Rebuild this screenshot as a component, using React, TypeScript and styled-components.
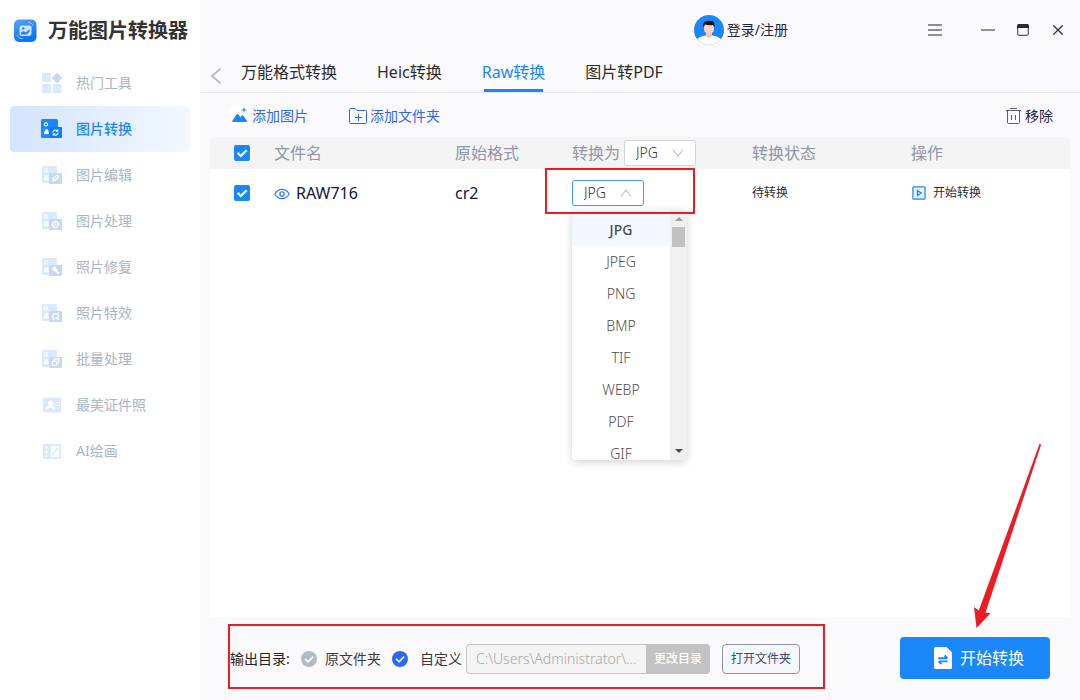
import React, { useState } from "react";
import styled, { createGlobalStyle, css } from "styled-components";

const BLUE = "#1a88fa";
const MARK_RED = "#ed1c24";

const GlobalStyle = createGlobalStyle`
  *, *::before, *::after { box-sizing: border-box; }
  body {
    margin: 0;
    background: #fafafc;
    color: #2b2b2b;
    font-family: "Noto Sans", "Noto Sans CJK SC", sans-serif;
    font-size: 14px;
    line-height: 20px;
  }
  button, input, select { font: inherit; color: inherit; }
  button { border: 0; padding: 0; background: none; cursor: pointer; }
  svg { display: block; flex: none; }
`;

const Page = styled.div`
  display: flex;
  min-height: 100vh;
`;

const Sidebar = styled.aside`
  flex: none;
  width: 200px;
  background: #fff;
`;

const Brand = styled.div`
  display: flex;
  align-items: center;
  gap: 10px;
  height: 60px;
  padding-left: 13px;
`;

const BrandName = styled.h1`
  margin: 0;
  padding-top: 2px;
  font-size: 20px;
  line-height: 28px;
  font-weight: 700;
  color: #333;
`;

const Nav = styled.nav`
  display: flex;
  flex-direction: column;
  padding: 0 10px;
`;

const NavItem = styled.a<{ $active?: boolean }>`
  display: flex;
  align-items: center;
  gap: 14px;
  height: 46px;
  padding-left: 31px;
  border-radius: 4px;
  text-decoration: none;
  color: #a9b5c2;
  ${(p) =>
    p.$active &&
    css`
      color: ${BLUE};
      font-weight: 500;
      background: linear-gradient(90deg, #d3e4ff, #f3f8ff);
    `}
`;

const Main = styled.main`
  flex: 1;
  min-width: 0;
  display: flex;
  flex-direction: column;
`;

const TitleBar = styled.header`
  display: flex;
  align-items: center;
  height: 60px;
  padding-right: 14px;
`;

const Account = styled.button`
  display: flex;
  align-items: center;
  gap: 3px;
  margin-left: auto;
  margin-right: 139px;
  color: #23233f;
`;

const WindowButtons = styled.div`
  display: flex;
  align-items: center;
`;

const WindowButton = styled.button<{ $gap?: number }>`
  display: grid;
  place-items: center;
  width: 16px;
  height: 20px;
  margin-left: ${(p) => p.$gap ?? 0}px;
`;

const TabBar = styled.nav`
  display: flex;
  align-items: stretch;
  height: 33px;
  border-bottom: 1px solid #e6e7ee;
  padding-left: 9px;
`;

const BackButton = styled.button`
  display: grid;
  place-items: center;
  width: 14px;
  margin-right: 18px;
`;

const TabList = styled.div`
  display: flex;
  gap: 40px;
`;

const Tab = styled.a<{ $active?: boolean }>`
  display: flex;
  flex-direction: column;
  justify-content: space-between;
  font-size: 16px;
  line-height: 24px;
  text-decoration: none;
  white-space: nowrap;
  color: ${(p) => (p.$active ? BLUE : "#2b2b2b")};
  &::after {
    content: "";
    height: 3px;
    margin: 0 2px;
    background: ${(p) => (p.$active ? BLUE : "transparent")};
  }
`;

const Toolbar = styled.div`
  display: flex;
  align-items: center;
  height: 44px;
  padding: 2px 27px 0 30px;
`;

const ToolButton = styled.button<{ $tone?: "dark" }>`
  display: flex;
  align-items: center;
  gap: 2px;
  margin-left: ${(p) => (p.$tone === "dark" ? "auto" : "0")};
  margin-right: ${(p) => (p.$tone === "dark" ? "0" : "41px")};
  color: ${(p) => (p.$tone === "dark" ? "#23233f" : "#2f66ee")};
`;

const Panel = styled.section`
  flex: 1;
  margin: 0 10px;
  background: #fff;
  border-radius: 4px 4px 0 0;
`;

const FileTable = styled.table`
  width: 100%;
  table-layout: fixed;
  border-collapse: separate;
  border-spacing: 0;
`;

const HeadCell = styled.th<{ $width?: number }>`
  width: ${(p) => (p.$width ? `${p.$width}px` : "auto")};
  height: 32px;
  padding: 0;
  background: #f4f4f4;
  text-align: left;
  font-size: 16px;
  line-height: 24px;
  font-weight: 400;
  color: #9095a8;
  white-space: nowrap;
  &:first-child { border-top-left-radius: 4px; padding-left: 24px; }
  &:last-child { border-top-right-radius: 4px; }
`;

const Cell = styled.td<{ $small?: boolean }>`
  height: 48px;
  padding: 0;
  font-size: ${(p) => (p.$small ? "12px" : "16px")};
  line-height: 24px;
  color: ${(p) => (p.$small ? "#2b2b2b" : "#14143a")};
  &:first-child { padding-left: 24px; }
`;

const Inline = styled.div<{ $gap: number }>`
  display: flex;
  align-items: center;
  gap: ${(p) => p.$gap}px;
`;

const RowAction = styled.button`
  display: flex;
  align-items: center;
  gap: 7px;
  padding-left: 1px;
  font-size: 12px;
`;

const Stack = styled.span`
  display: grid;
  width: max-content;
  align-items: center;
  > * { grid-area: 1 / 1; }
  > svg { pointer-events: none; }
`;

const CheckBox = styled.input`
  appearance: none;
  width: 16px;
  height: 16px;
  margin: 0;
  border-radius: 2px;
  border: 1px solid #c8ccd4;
  background: #fff;
  &:checked { background: ${BLUE}; border-color: ${BLUE}; }
`;

const Radio = styled.input`
  appearance: none;
  width: 16px;
  height: 16px;
  margin: 0;
  border-radius: 50%;
  background: #b1bac7;
  &:checked { background: #2f66ee; }
`;

const SelectStack = styled(Stack)`
  > svg { justify-self: end; margin-right: 12px; }
`;

const FormatSelect = styled.select<{ $open?: boolean }>`
  appearance: none;
  width: 72px;
  height: 26px;
  padding: 0 0 2px 11px;
  border: 1px solid ${(p) => (p.$open ? "#3d9bfb" : "#d5d5d8")};
  border-radius: 3px;
  background: #fff;
  font-size: 14px;
  font-weight: 300;
  color: #333;
  outline: 0;
`;

const MenuAnchor = styled.div`
  position: relative;
  display: flex;
`;

const MarkBox = styled.div`
  position: absolute;
  left: -27px;
  top: -12px;
  width: 150px;
  height: 46px;
  border: 2px solid ${MARK_RED};
  pointer-events: none;
`;

const Menu = styled.div`
  position: absolute;
  left: 0;
  top: 30px;
  display: flex;
  width: 115px;
  height: 250px;
  overflow: hidden;
  background: #fff;
  border-radius: 4px;
  box-shadow: 0 2px 8px rgba(0, 0, 0, 0.18);
`;

const MenuList = styled.ul`
  flex: 1;
  margin: 0;
  padding: 0;
  list-style: none;
  text-align: center;
`;

const MenuItem = styled.li<{ $selected?: boolean }>`
  height: ${(p) => (p.$selected ? 36 : 32)}px;
  padding-top: ${(p) => (p.$selected ? 4 : 0)}px;
  font-size: 14px;
  line-height: 32px;
  font-weight: ${(p) => (p.$selected ? 500 : 300)};
  color: #4d4d4d;
  background: ${(p) => (p.$selected ? "#f3f7ff" : "#fff")};
`;

const ScrollTrack = styled.div`
  display: flex;
  flex-direction: column;
  align-items: center;
  width: 17px;
  padding: 7px 0;
  background: #f0f0f0;
`;

const ScrollThumb = styled.div`
  width: 13px;
  height: 20px;
  margin: 6px 0 auto;
  background: #c1c1c1;
`;

const Footer = styled.footer`
  position: relative;
  display: flex;
  align-items: center;
  justify-content: space-between;
  height: 83px;
  padding: 0 30px 2px 28px;
`;

const OutputGroup = styled.div`
  display: flex;
  align-items: center;
  height: 65px;
  padding: 5px 23px 0 0;
  border: 2px solid ${MARK_RED};
  margin-bottom: 3px;
  white-space: nowrap;
`;

const OutputTitle = styled.span`
  width: 71px;
  color: #222;
`;

const RadioLabel = styled.label<{ $gap: number; $after: number }>`
  display: flex;
  align-items: center;
  gap: ${(p) => p.$gap}px;
  margin-right: ${(p) => p.$after}px;
  color: #3a3a3a;
`;

const PathInput = styled.input`
  width: 180px;
  height: 30px;
  padding: 0 9px;
  border: 1px solid #c3c3c3;
  border-right: 0;
  border-radius: 4px 0 0 4px;
  background: #f4f4f4;
  font-weight: 300;
  color: #a8a8a8;
`;

const ChangeButton = styled.button`
  width: 64px;
  height: 30px;
  border-radius: 0 4px 4px 0;
  background: #c3c3c3;
  font-size: 12px;
  font-weight: 500;
  color: #fff;
`;

const OpenButton = styled.button`
  width: 78px;
  height: 30px;
  margin-left: 12px;
  border: 1px solid #8f93b0;
  border-radius: 4px;
  background: #f4f7fc;
  font-size: 12px;
  color: #45486b;
`;

const StartButton = styled.button`
  display: flex;
  align-items: center;
  justify-content: center;
  gap: 8px;
  width: 150px;
  height: 42px;
  padding-left: 8px;
  border-radius: 4px;
  background: ${BLUE};
  font-size: 16px;
  line-height: 24px;
  color: #fff;
`;

const PointerArrow = styled.svg`
  position: absolute;
  right: 38px;
  top: -174px;
  pointer-events: none;
`;

const Tick = () => (
  <svg width="16" height="16" viewBox="0 0 16 16" fill="none" stroke="#fff" aria-hidden="true">
    <path d="M3.6 7.8 6.8 11l5.8-5.8" strokeWidth="2.2" />
  </svg>
);

const RoundTick = () => (
  <svg width="16" height="16" viewBox="0 0 16 16" fill="none" stroke="#fff" aria-hidden="true">
    <path d="M4 7.8 7 10.8l5.2-5.2" strokeWidth="1.6" />
  </svg>
);

const Chevron = ({ up }: { up?: boolean }) => (
  <svg width="12" height="8" viewBox="0 0 12 8" fill="none" stroke="#bbbcc0" aria-hidden="true">
    <path d={up ? "M1 7.5 6 1l5 6.5" : "M1 .5 6 7l5-6.5"} strokeWidth="1.1" />
  </svg>
);

const Logo = () => (
  <svg width="25" height="25" viewBox="0 0 25 25" aria-hidden="true">
    <defs>
      <linearGradient id="logo" x1="0" y1="0" x2="0.4" y2="1">
        <stop offset="0" stopColor="#55a6ff" />
        <stop offset="1" stopColor="#0a72f5" />
      </linearGradient>
    </defs>
    <rect x="1" y="1.500" width="22.500" height="22.500" rx="5" fill="url(#logo)" />
    <path d="M8 7.500h9l1.500 1v7.500l-1.500 2H8l-1.500-1.500V9z" fill="#cfe4ff" />
    <circle cx="10.300" cy="10.500" r="1.200" fill="#2583f8" />
    <path d="M8 16.500v-1.800l2.500-1.700 2.300 1.500 3.700-3.500v2.500l-2.500 3z" fill="#2583f8" />
    <path d="M15 4.600c2.500-.3 4.500 1 5.200 3.400M4 17.300c1 2.200 3 3.500 5.800 3.300" fill="none" stroke="#9ccaff" />
  </svg>
);

const glyphs: Record<string, React.ReactNode> = {
  convert: (
    <g fill="none" strokeWidth="1.1">
      <path d="M10.800 13.400a2.700 2.700 0 0 1 4.600-1.600M16.200 13.600a2.700 2.700 0 0 1-4.600 1.700" />
      <path d="M15.800 10.300v1.900h-1.900M11.200 16.700v-1.800h1.900" />
    </g>
  ),
  edit: <path d="m10.800 16 .2-2.200 3.600-3.300c1-.5 2.200.7 1.700 1.700l-3.500 3.300z" fill="none" strokeWidth="1.200" />,
  gear: (
    <g fill="none">
      <circle cx="13.500" cy="13.500" r="2.800" strokeWidth="1.200" />
      <circle cx="13.500" cy="13.500" r=".7" fill="#fff" />
      <path d="M13.500 9.700v1.300M13.500 16v1.300M9.700 13.500H11M16 13.500h1.300M10.900 10.900l.8.800M15.300 15.300l.8.800M16.100 10.900l-.8.800M11.700 15.300l-.8.800" />
    </g>
  ),
  repair: (
    <g>
      <path d="M12.500 12.500l4.300 4" strokeWidth="1.900" />
      <path d="M10.300 10.900l1.400 1 .9-.9-.8-1.400a2.500 2.500 0 0 1 2.400 3.400 2.500 2.500 0 0 1-3.900-2.100z" fill="#fff" />
    </g>
  ),
  effect: (
    <g fill="none">
      <path d="M11 10.500c1 .7 1.800.7 2.500 0 .8.700 1.600.7 2.500 0-.3 1 0 1.800.6 2.400-.6.600-.6 1.300-.3 2M13.700 16c-.8-.4-1.700-.3-2.700.3.300-1 .2-1.800-.6-2.400.7-.7.900-1.600.6-3.400" strokeWidth="1.200" />
      <path d="M14.200 14.200l2.800 2.800" strokeWidth="1.500" />
    </g>
  ),
  batch: (
    <g fill="none" strokeWidth="1.100">
      <rect x="10.300" y="12.300" width="4.200" height="4.200" />
      <path d="M12.300 12V9.900h4.400v4.400h-2" />
    </g>
  ),
};

const PictureIcon = ({ glyph, active }: { glyph: string; active?: boolean }) => (
  <svg width="21" height="20" viewBox="0 0 21 20" aria-hidden="true">
    <rect x={active ? 0 : 1} y={active ? 0 : 1} width={active ? 17 : 15} height={active ? 19 : 17} rx="1.500" fill={active ? BLUE : "#d9eaff"} />
    <g stroke="#fff" fill="#fff">
      <circle cx="5" cy="5.400" r="1.600" fill="none" strokeWidth="1.100" />
      <path d="M4.600 10.500h2l1.500 4.500H2.800z" strokeWidth=".4" />
    </g>
    <rect x="8" y="8" width="13" height="11" rx="1" fill={active ? "#0c7df5" : "#c6d9ef"} />
    <g transform="translate(1 0)" stroke="#fff">{glyphs[glyph]}</g>
  </svg>
);

const ToolsIcon = () => (
  <svg width="21" height="20" viewBox="0 0 21 20" aria-hidden="true">
    <g fill="#d9eaff">
      <rect x="1" y="0" width="9" height="9" rx="1" />
      <rect x="1" y="11" width="9" height="9" rx="1" />
      <rect x="11.500" y="11" width="9" height="9" rx="1" />
    </g>
    <rect x="12.200" y="1.200" width="7.600" height="7.600" rx="1" transform="rotate(45 16 5)" fill="#c6d9ef" />
  </svg>
);

const IdIcon = () => (
  <svg width="21" height="20" viewBox="0 0 21 20" aria-hidden="true">
    <rect x="2" y="2.500" width="18" height="15" rx="1" fill="#d9eaff" />
    <circle cx="9.500" cy="8" r="2.600" fill="#fff" />
    <path d="M4.500 14.500c.4-2.500 2-4 5-4s4.600 1.500 5 4h-2.300c-.3-1.300-1.200-2-2.700-2s-2.400.7-2.700 2z" fill="#fff" />
    <path d="M15 7.500h4M15 10.500h4" stroke="#fff" />
  </svg>
);

const PaintIcon = () => (
  <svg width="21" height="20" viewBox="0 0 21 20" aria-hidden="true">
    <rect x="2" y="3" width="18" height="15" rx="1" fill="#d9eaff" />
    <path d="M5.500 5v2.500M5.500 9v3M5.500 13.500V16M4.200 11.500h2.600" stroke="#fff" strokeWidth="1.100" />
    <rect x="10" y="5" width="8.500" height="11" fill="#fff" />
    <path d="M11 14.500l6-8" stroke="#d9eaff" strokeWidth="1.400" />
  </svg>
);

const Avatar = () => (
  <svg width="30" height="30" viewBox="0 0 30 30" aria-hidden="true">
    <defs>
      <clipPath id="face"><circle cx="15" cy="15" r="15" /></clipPath>
    </defs>
    <g clipPath="url(#face)">
      <rect width="30" height="30" fill={BLUE} />
      <path d="M2.500 30v-5c1-2 4-3.500 9-4.500h7c5 1 8 2.500 9 4.500v5z" fill="#fff" />
      <path d="M12 16h6v5c-1 2-5 2-6 0z" fill="#f7c3ad" />
      <path d="M10 9h10v5c0 3.500-3 5-5 5s-5-1.500-5-5z" fill="#fbd3c0" />
      <path d="M9.500 12.500c-.7-3-.2-5.500 2-6 2-1.200 5-1 7.500-.3 1.500.7 2 3 1.200 6.300l-1.200-2.500c-2.500.3-5.500.3-8-.5z" fill="#161616" />
    </g>
  </svg>
);

const AddPictureIcon = () => (
  <svg width="20" height="20" viewBox="0 0 20 20" aria-hidden="true">
    <rect width="20" height="20" rx="3" fill="#fff" />
    <path d="M2.300 15 6.500 8.500c.6-.8 1.300-.8 1.900 0l1.900 2.600 1.200-1.300c.7-.7 1.400-.6 2 .1l3.300 4.600c.5 1 .1 1.500-.8 1.500H3c-.9 0-1.100-.4-.7-1z" fill={BLUE} />
    <path d="M14 1.500v5M11.500 4h5" stroke={BLUE} strokeWidth="1.100" />
  </svg>
);

const FolderIcon = () => (
  <svg width="19" height="18" viewBox="0 0 19 18" fill="none" stroke="#2f66ee" aria-hidden="true">
    <path d="M.5 15.500v-13a1 1 0 0 1 1-1H6l2 2h8.500a1 1 0 0 1 1 1v11a1 1 0 0 1-1 1h-15a1 1 0 0 1-1-1zM9.500 7v7M6 10.500h7" />
  </svg>
);

const TrashIcon = () => (
  <svg width="17" height="18" viewBox="0 0 17 18" fill="none" stroke="#5c5c7c" aria-hidden="true">
    <path d="M0 3.500h15M4 1.500h7M1.500 3.500v12a1 1 0 0 0 1 1h10a1 1 0 0 0 1-1v-12M5.500 8v5M9.500 8v5" />
  </svg>
);

const EyeIcon = () => (
  <svg width="16" height="14" viewBox="0 0 16 14" fill="none" stroke="#2b7cf8" aria-hidden="true">
    <path d="M.8 8C2.500 5 5 3.300 8 3.300S13.500 5 15.200 8C13.500 11 11 12.700 8 12.700S2.500 11 .8 8z" strokeWidth="1.200" />
    <circle cx="8" cy="8" r="2.100" strokeWidth="1.300" />
  </svg>
);

const PlayIcon = () => (
  <svg width="14" height="14" viewBox="0 0 14 14" fill="none" stroke="#57a5fb" aria-hidden="true">
    <rect x=".9" y=".9" width="12.200" height="12.200" rx="1" strokeWidth="1.700" fill="#e6f2ff" />
    <path d="M5.500 4.500 9.200 7 5.500 9.500z" stroke={BLUE} strokeWidth="1.300" />
  </svg>
);

const FileSwapIcon = () => (
  <svg width="18" height="22" viewBox="0 0 18 22" aria-hidden="true">
    <path d="M1.500 0h11L18 5.500v15a1.500 1.500 0 0 1-1.500 1.500h-15A1.500 1.500 0 0 1 0 20.500v-19A1.500 1.500 0 0 1 1.500 0z" fill="#fff" />
    <path d="M13.200 3.500v1.200h1.200z" fill={BLUE} />
    <path d="M4.300 11.200h9M10.500 8.500l2.900 2.700M13.700 14.400H4.700M7.500 17.100l-2.900-2.700" fill="none" stroke={BLUE} strokeWidth="1.900" />
  </svg>
);

const navItems = [
  { label: "热门工具", icon: <ToolsIcon /> },
  { label: "图片转换", icon: <PictureIcon glyph="convert" active />, active: true },
  { label: "图片编辑", icon: <PictureIcon glyph="edit" /> },
  { label: "图片处理", icon: <PictureIcon glyph="gear" /> },
  { label: "照片修复", icon: <PictureIcon glyph="repair" /> },
  { label: "照片特效", icon: <PictureIcon glyph="effect" /> },
  { label: "批量处理", icon: <PictureIcon glyph="batch" /> },
  { label: "最美证件照", icon: <IdIcon /> },
  { label: "AI绘画", icon: <PaintIcon /> },
];

const tabs = ["万能格式转换", "Heic转换", "Raw转换", "图片转PDF"];
const formats = ["JPG", "JPEG", "PNG", "BMP", "TIF", "WEBP", "PDF", "GIF"];

const SelectField = ({ label, open }: { label: string; open?: boolean }) => (
  <SelectStack>
    <FormatSelect aria-label={label} defaultValue="JPG" $open={open}>
      {formats.map((f) => (
        <option key={f}>{f}</option>
      ))}
    </FormatSelect>
    <Chevron up={open} />
  </SelectStack>
);

const CheckField = ({ label }: { label: string }) => {
  const [on, setOn] = useState(true);
  return (
    <Stack>
      <CheckBox type="checkbox" aria-label={label} checked={on} onChange={() => setOn(!on)} />
      <Tick />
    </Stack>
  );
};

export default function App() {
  const [target, setTarget] = useState("custom");
  return (
    <>
      <GlobalStyle />
      <Page>
        <Sidebar>
          <Brand>
            <Logo />
            <BrandName>万能图片转换器</BrandName>
          </Brand>
          <Nav>
            {navItems.map((item) => (
              <NavItem key={item.label} href="#" $active={item.active}>
                {item.icon}
                {item.label}
              </NavItem>
            ))}
          </Nav>
        </Sidebar>

        <Main>
          <TitleBar>
            <Account>
              <Avatar />
              登录/注册
            </Account>
            <WindowButtons>
              <WindowButton aria-label="菜单">
                <svg width="14" height="12" viewBox="0 0 14 12" stroke="#8f8f8f" strokeWidth="2">
                  <path d="M0 1h14M0 6h14M0 11h14" />
                </svg>
              </WindowButton>
              <WindowButton aria-label="最小化" $gap={37}>
                <svg width="14" height="2" viewBox="0 0 14 2"><rect width="14" height="2" fill="#949494" /></svg>
              </WindowButton>
              <WindowButton aria-label="最大化" $gap={19}>
                <svg width="12" height="12" viewBox="0 0 12 12">
                  <rect x=".7" y=".7" width="10.600" height="10.600" rx="1.500" fill="none" stroke="#5a5a5a" strokeWidth="1.200" />
                  <path d="M0 4V2a2 2 0 0 1 2-2h8a2 2 0 0 1 2 2v2z" fill="#2b2b2b" />
                </svg>
              </WindowButton>
              <WindowButton aria-label="关闭" $gap={19}>
                <svg width="10" height="10" viewBox="0 0 10 10" stroke="#333" strokeWidth="1.300">
                  <path d="M.3.3l9.400 9.400M9.700.3.300 9.700" />
                </svg>
              </WindowButton>
            </WindowButtons>
          </TitleBar>

          <TabBar>
            <BackButton aria-label="返回">
              <svg width="12" height="16" viewBox="0 0 12 16" fill="none" stroke="#bcbcbc" strokeWidth="1.800">
                <path d="M10.500.7 2 8l8.500 7.300" />
              </svg>
            </BackButton>
            <TabList>
              {tabs.map((t) => (
                <Tab key={t} href="#" $active={t === "Raw转换"}>{t}</Tab>
              ))}
            </TabList>
          </TabBar>

          <Toolbar>
            <ToolButton>
              <AddPictureIcon />
              添加图片
            </ToolButton>
            <ToolButton>
              <FolderIcon />
              添加文件夹
            </ToolButton>
            <ToolButton $tone="dark">
              <TrashIcon />
              移除
            </ToolButton>
          </Toolbar>

          <Panel>
            <FileTable>
              <thead>
                <tr>
                  <HeadCell $width={64}><CheckField label="全选" /></HeadCell>
                  <HeadCell $width={181}>文件名</HeadCell>
                  <HeadCell $width={117}>原始格式</HeadCell>
                  <HeadCell $width={180}>
                    <Inline $gap={4}>
                      转换为
                      <SelectField label="全部转换为" />
                    </Inline>
                  </HeadCell>
                  <HeadCell $width={159}>转换状态</HeadCell>
                  <HeadCell>操作</HeadCell>
                </tr>
              </thead>
              <tbody>
                <tr>
                  <Cell><CheckField label="选择 RAW716" /></Cell>
                  <Cell>
                    <Inline $gap={6}>
                      <EyeIcon />
                      RAW716
                    </Inline>
                  </Cell>
                  <Cell>cr2</Cell>
                  <Cell>
                    <MenuAnchor>
                      <SelectField label="转换为" open />
                      <Menu>
                        <MenuList role="listbox" aria-label="输出格式">
                          {formats.map((f) => (
                            <MenuItem key={f} role="option" aria-selected={f === "JPG"} $selected={f === "JPG"}>
                              {f}
                            </MenuItem>
                          ))}
                        </MenuList>
                        <ScrollTrack>
                          <svg width="8" height="4" viewBox="0 0 8 4"><path d="M0 4 4 0l4 4z" fill="#9d9d9d" /></svg>
                          <ScrollThumb />
                          <svg width="8" height="4" viewBox="0 0 8 4"><path d="M0 0h8L4 4z" fill="#4d4d4d" /></svg>
                        </ScrollTrack>
                      </Menu>
                      <MarkBox />
                    </MenuAnchor>
                  </Cell>
                  <Cell $small>待转换</Cell>
                  <Cell $small>
                    <RowAction>
                      <PlayIcon />
                      开始转换
                    </RowAction>
                  </Cell>
                </tr>
              </tbody>
            </FileTable>
          </Panel>

          <Footer>
            <OutputGroup>
              <OutputTitle>输出目录:</OutputTitle>
              <RadioLabel $gap={8} $after={11}>
                <Stack>
                  <Radio type="radio" name="target" checked={target === "source"} onChange={() => setTarget("source")} />
                  <RoundTick />
                </Stack>
                原文件夹
              </RadioLabel>
              <RadioLabel $gap={12} $after={4}>
                <Stack>
                  <Radio type="radio" name="target" checked={target === "custom"} onChange={() => setTarget("custom")} />
                  <RoundTick />
                </Stack>
                自定义
              </RadioLabel>
              <PathInput aria-label="输出路径" readOnly value="C:\Users\Administrator\..." />
              <ChangeButton>更改目录</ChangeButton>
              <OpenButton>打开文件夹</OpenButton>
            </OutputGroup>
            <StartButton>
              <FileSwapIcon />
              开始转换
            </StartButton>
            <PointerArrow width="70" height="186" viewBox="972 443 70 186" aria-hidden="true">
              <path d="M1039.500 444l1.700.6L985.500 612.800l5 .4L976.500 628 974 607l4.800 3.600z" fill={MARK_RED} />
            </PointerArrow>
          </Footer>
        </Main>
      </Page>
    </>
  );
}
